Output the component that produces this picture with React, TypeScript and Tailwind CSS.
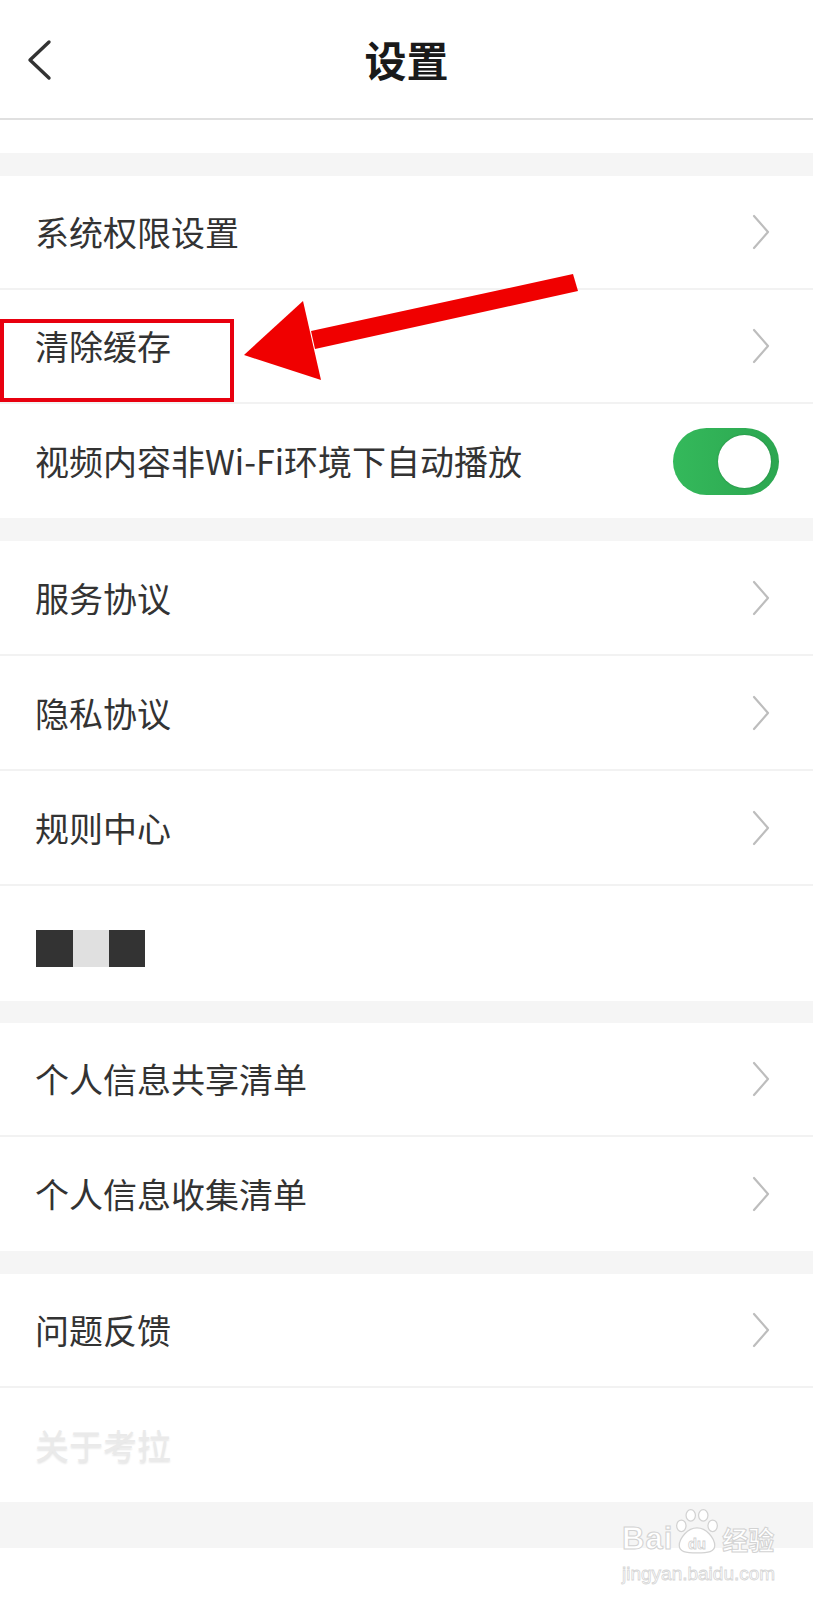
import { ReactNode } from 'react';

const font = { fontFamily: '"Noto Sans CJK SC", "Noto Sans", sans-serif' };

function ChevronRight() {
  return (
    <svg width="20" height="36" viewBox="0 0 20 36" fill="none" stroke="#bdbdbd" strokeWidth={2.2} strokeLinecap="round" strokeLinejoin="round">
      <path d="M3 2 L17 18 L3 34" />
    </svg>
  );
}

function Row({ children, right, last, h = 'h-[114px]' }: { children: ReactNode; right?: ReactNode; last?: boolean; h?: string }) {
  return (
    <div className={`${h} flex items-center justify-between pl-[35px] pr-[42px] bg-white ${last ? '' : 'border-b-2 border-[#f2f2f2]'}`}>
      <div className="text-[34px] text-[#333] leading-none">{children}</div>
      {right ?? <ChevronRight />}
    </div>
  );
}

function Toggle() {
  return (
    <div className="w-[106px] h-[67px] rounded-full bg-gradient-to-r from-[#34b95b] to-[#2ca650] flex items-center justify-end pr-[8px] -mr-[8px]">
      <div className="w-[53px] h-[53px] rounded-full bg-white shadow-[0_0_2px_rgba(0,0,0,0.25)]" />
    </div>
  );
}

function Band({ h }: { h: string }) {
  return <div className={`${h} bg-[#f5f5f5]`} />;
}

export default function App() {
  return (
    <div className="relative w-[813px] h-[1600px] bg-white overflow-hidden" style={font}>
      {/* Header */}
      <div className="h-[120px] grid grid-cols-[120px_1fr_120px] items-center border-b-2 border-[#e0e0e0]">
        <div className="pl-[26px] pt-[2px]">
          <svg width="28" height="42" viewBox="0 0 28 42" fill="none" stroke="#333" strokeWidth={3.4} strokeLinecap="round" strokeLinejoin="round">
            <path d="M23 3 L4 21 L23 39" />
          </svg>
        </div>
        <div className="text-center text-[42px] font-bold text-[#1a1a1a] leading-none">设置</div>
        <div />
      </div>
      <div className="h-[33px]" />
      <Band h="h-[23px]" />

      <Row>系统权限设置</Row>
      <Row>清除缓存</Row>
      <Row last right={<Toggle />}>视频内容非Wi-Fi环境下自动播放</Row>

      <Band h="h-[23px]" />

      <Row h="h-[115px]">服务协议</Row>
      <Row h="h-[115px]">隐私协议</Row>
      <Row h="h-[115px]">规则中心</Row>
      <div className="h-[115px] flex items-center pl-[36px] pt-[10px]">
        <div className="flex">
          <div className="w-[37px] h-[37px] bg-[#333]" />
          <div className="w-[36px] h-[37px] bg-[#e0e0e0]" />
          <div className="w-[36px] h-[37px] bg-[#333]" />
        </div>
      </div>

      <Band h="h-[22px]" />

      <Row>个人信息共享清单</Row>
      <Row last>个人信息收集清单</Row>

      <Band h="h-[23px]" />

      <Row>问题反馈</Row>
      <div className="h-[114px] flex items-center pl-[35px]">
        <div className="text-[34px] leading-none text-[#eaeaea] [text-shadow:0_2px_2px_rgba(0,0,0,0.1)]">关于考拉</div>
      </div>

      <Band h="h-[46px]" />

      {/* Annotation: red box + arrow */}
      <div className="absolute left-0 top-[319px] w-[234px] h-[83px] border-4 border-[#e8000f]" />
      <svg className="absolute inset-0 pointer-events-none" width="813" height="1600" viewBox="0 0 813 1600">
        <polygon points="573,274 578,291 315,349 311,331" fill="#f00000" />
        <polygon points="303,301 244,355 321,380" fill="#f00000" />
      </svg>

      {/* Watermark */}
      <div className="absolute left-[622px] top-[1508px] flex flex-col items-start pointer-events-none">
        <div className="flex items-end leading-none">
          <span className="text-[31px] font-bold text-white [-webkit-text-stroke:1px_#d2d2d2] tracking-[1px]" style={{ fontFamily: '"Liberation Sans", sans-serif' }}>Bai</span>
          <svg width="48" height="46" viewBox="0 0 46 44" fill="white" stroke="#d2d2d2" strokeWidth={1.2}>
            <ellipse cx="17" cy="7" rx="4.5" ry="5.5" />
            <ellipse cx="29" cy="7" rx="4.5" ry="5.5" />
            <ellipse cx="8" cy="17" rx="4.5" ry="5.5" />
            <ellipse cx="38" cy="17" rx="4.5" ry="5.5" />
            <path d="M23 19 C14 19 6 29 6 36 C6 42 12 43 23 43 C34 43 40 42 40 36 C40 29 32 19 23 19 Z" />
            <text x="23" y="39" textAnchor="middle" fontSize="14" fontWeight="bold" fill="white" stroke="#d2d2d2" strokeWidth={0.8} fontFamily="Liberation Sans, sans-serif">du</text>
          </svg>
          <span className="text-[26px] font-bold text-white [-webkit-text-stroke:1px_#d2d2d2] ml-[1px] mb-[2px]">经验</span>
        </div>
        <div className="text-[19px] leading-none mt-[10px] text-white [-webkit-text-stroke:0.8px_#d6d6d6]" style={{ fontFamily: '"Liberation Sans", sans-serif' }}>
          jingyan.baidu.com
        </div>
      </div>
    </div>
  );
}
